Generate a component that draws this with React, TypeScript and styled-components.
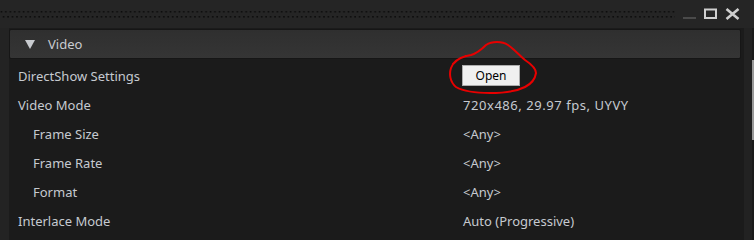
import React from "react";
import styled, { createGlobalStyle } from "styled-components";

const Global = createGlobalStyle`
  html, body { margin: 0; padding: 0; background: #1b1b1b; }
  body { width: 754px; height: 240px; overflow: hidden; font-family: "Noto Sans", "Open Sans", sans-serif; }
`;

const Window = styled.div`
  position: relative;
  width: 754px;
  height: 240px;
  display: flex;
  flex-direction: column;
  background: #232323;
  overflow: hidden;
`;

const TitleBar = styled.div`
  height: 28px;
  display: flex;
  align-items: stretch;
  background: #252525;
  flex-shrink: 0;
`;

const Grip = styled.svg`
  display: block;
  margin-top: 9px;
`;

const WinButtons = styled.div`
  display: flex;
  align-items: flex-start;
  padding-top: 8px;
  padding-left: 8px;
  gap: 8px;
`;

const Middle = styled.div`
  flex: 1;
  display: flex;
  min-height: 0;
`;

const Panel = styled.div`
  margin-left: 9px;
  width: 735px;
  background: #1b1b1b;
  display: flex;
  flex-direction: column;
  padding-top: 1px;
`;

const Header = styled.div`
  height: 30px;
  width: 732px;
  display: flex;
  align-items: center;
  gap: 13px;
  padding-left: 15px;
  box-sizing: border-box;
  border: 1px solid #161616;
  border-radius: 2px;
  background: linear-gradient(#2f2f2f, #353535);
  color: #c9ccd0;
  font-size: 13px;
  margin-bottom: 2px;
`;

const Row = styled.div`
  height: 29px;
  display: grid;
  grid-template-columns: 454px 1fr;
  align-items: center;
  color: #c6cad0;
  font-size: 13px;
`;

const Label = styled.div<{ $indent?: boolean }>`
  padding-left: ${(p) => (p.$indent ? 24 : 9)}px;
`;

const Value = styled.div<{ $numeric?: boolean }>`
  display: flex;
  align-items: center;
  letter-spacing: ${(p) => (p.$numeric ? "0.55px" : "0")};
`;

const OpenButton = styled.button`
  width: 58px;
  height: 21px;
  margin-left: -1px;
  background: #f0f0f0;
  border: 1px solid #adadad;
  border-radius: 0;
  color: #000;
  font-family: "Noto Sans", "Open Sans", sans-serif;
  font-size: 12px;
  padding: 0;
  display: flex;
  align-items: center;
  justify-content: center;
`;

const RightEdge = styled.div`
  width: 8px;
  background: #222;
`;

const ScrollTrack = styled.div`
  width: 2px;
  display: flex;
  flex-direction: column;
  background: #1a1a1a;
`;

const ScrollThumb = styled.div`
  margin-top: 32px;
  height: 80px;
  flex-shrink: 0;
  background: #9a9a9a;
`;

const Annotation = styled.svg`
  position: absolute;
  left: 0;
  top: 0;
  pointer-events: none;
`;

const rows: { label: string; value?: string; indent?: boolean; button?: boolean; numeric?: boolean }[] = [
  { label: "DirectShow Settings", button: true },
  { label: "Video Mode", value: "720x486, 29.97 fps, UYVY", numeric: true },
  { label: "Frame Size", value: "<Any>", indent: true },
  { label: "Frame Rate", value: "<Any>", indent: true },
  { label: "Format", value: "<Any>", indent: true },
  { label: "Interlace Mode", value: "Auto (Progressive)" },
];

export default function App() {
  return (
    <Window>
      <Global />
      <TitleBar>
        <Grip width="675" height="12" viewBox="0 0 675 12">
          <defs>
            <pattern id="grip" width="4.45" height="12" patternUnits="userSpaceOnUse">
              <rect x="0.6" y="2" width="1.6" height="1.6" fill="#0c0c0c" />
              <rect x="2.8" y="7" width="1.6" height="1.6" fill="#0c0c0c" />
            </pattern>
          </defs>
          <rect x="0" y="0" width="675" height="12" fill="url(#grip)" />
        </Grip>
        <WinButtons>
          <svg width="13" height="12" viewBox="0 0 13 12">
            <rect x="0" y="9" width="13" height="2" fill="#4a4a4a" />
          </svg>
          <svg width="13" height="12" viewBox="0 0 13 12">
            <rect x="1" y="1.5" width="11" height="8.5" fill="none" stroke="#cfcfcf" strokeWidth="2" />
          </svg>
          <svg width="15" height="12" viewBox="0 0 15 12">
            <path d="M1.5 1 L13.5 11 M13.5 1 L1.5 11" stroke="#cfcfcf" strokeWidth="2.6" />
          </svg>
        </WinButtons>
      </TitleBar>
      <Middle>
        <Panel>
          <Header>
            <svg width="10" height="9" viewBox="0 0 10 9">
              <path d="M0 0 H10 L5 9 Z" fill="#c9ccd0" />
            </svg>
            <span>Video</span>
          </Header>
          {rows.map((r) => (
            <Row key={r.label}>
              <Label $indent={r.indent}>{r.label}</Label>
              <Value $numeric={r.numeric}>{r.button ? <OpenButton>Open</OpenButton> : r.value}</Value>
            </Row>
          ))}
        </Panel>
        <RightEdge />
        <ScrollTrack>
          <ScrollThumb />
        </ScrollTrack>
      </Middle>
      <Annotation width="754" height="240" viewBox="0 0 754 240">
        <path
          d="M453 64 C458 58 464 56 471 55 C478 53 483 48 486 45 C492 41 502 41 508 45 C514 49 519 55 525 60 C531 64 536 68 536 73 C535 80 531 84 525 87 C517 91 505 93 490 93 C475 93 463 91 456 87 C450 82 449 74 451 68 C453 62 459 58 466 56"
          fill="none"
          stroke="#e80000"
          strokeWidth="2"
          strokeLinecap="round"
        />
      </Annotation>
    </Window>
  );
}
